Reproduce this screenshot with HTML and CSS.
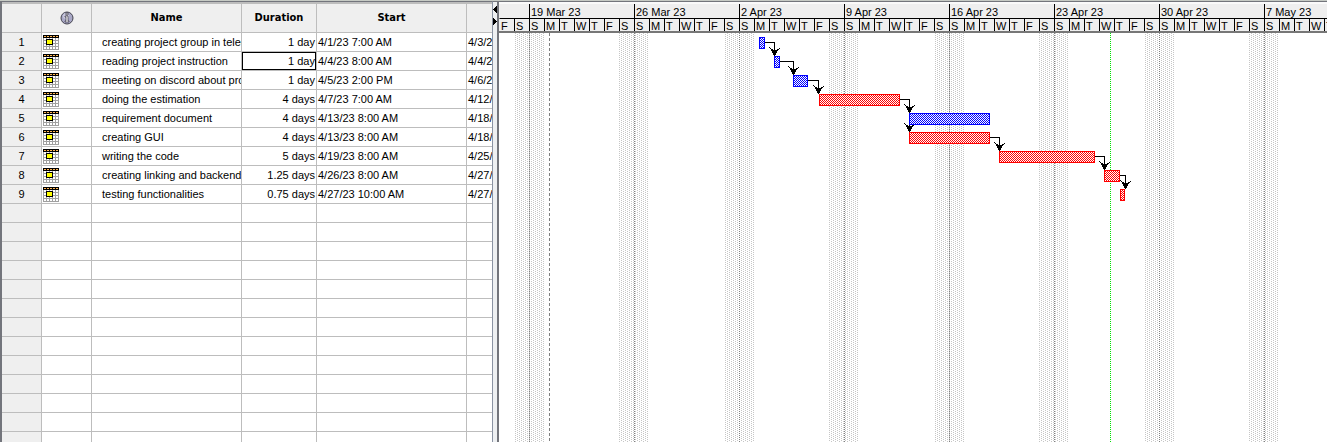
FILE: index.html
```
<!DOCTYPE html>
<html lang="en">
<head>
<meta charset="utf-8">
<title>Project Gantt</title>
<link rel="stylesheet" href="styles.css">
</head>
<body>
<svg class="defs" aria-hidden="true">
  <g id="calendar">
    <path fill="#fff" d="M0 0h16v15H0z"/>
    <path fill="#a0a0a0" d="M0 3h1v12H0zM3 3h1v12H3zM6 3h1v12H6zM9 3h1v12H9zM12 3h1v12h-1zM15 3h1v12h-1zM0 5h16v1H0zM0 8h16v1H0zM0 11h16v1H0zM0 14h16v1H0z"/>
    <path d="M0 0h16v3H0z"/>
    <path fill="#ffb655" d="M1 1h2v1H1zM4 1h2v1H4zM7 1h2v1H7zM10 1h2v1h-2zM13 1h2v1h-2z"/>
    <path d="M3 4h7v6H3z"/>
    <path fill="#ff0" d="M4 5h5v4H4z"/>
  </g>
</svg>
<main class="app">
  <section class="sheet">
    <table class="tasks">
      <colgroup><col class="c-id"><col class="c-info"><col class="c-name"><col class="c-dur"><col class="c-date"><col class="c-date"></colgroup>
      <thead>
        <tr>
          <th></th>
          <th class="info-head"><svg class="info" width="14" height="14" viewBox="0 0 14 14" role="img" aria-label="Indicators"><circle cx="7" cy="7" r="6" fill="#a9a8c6" stroke="#44434f"/><circle cx="6" cy="5" r="3" fill="#c9c8dd"/><path d="M6 2h2v2H6zM5 5h3v5h1v1H5v-1h1V6H5z" fill="#fff" stroke="#33323f" stroke-width=".7"/></svg></th>
          <th>Name</th><th>Duration</th><th>Start</th><th></th>
        </tr>
      </thead>
      <tbody id="rows"></tbody>
    </table>
  </section>
  <div class="splitter">
    <svg width="4" height="24" viewBox="0 0 4 24" shape-rendering="crispEdges" aria-hidden="true"><path d="M3 2h1v7H3zM2 3h1v5H2zM1 4h1v3H1zM0 5h1v1H0zM0 14h1v7H0zM1 15h1v5H1zM2 16h1v3H2zM3 17h1v1H3z"/></svg>
  </div>
  <section class="gantt">
    <header class="scale" id="scale"></header>
    <svg class="chart" id="chart" shape-rendering="crispEdges" role="img" aria-label="Gantt chart">
      <defs>
        <pattern id="weekend" width="4" height="2" patternUnits="userSpaceOnUse"><path fill="#c6c6c6" d="M0 0h1v1H0zM2 1h1v1H2z"/></pattern>
        <pattern id="dots" width="1" height="2" patternUnits="userSpaceOnUse"><path fill="#808080" d="M0 0h1v1H0z"/></pattern>
        <pattern id="today" width="1" height="2" patternUnits="userSpaceOnUse"><path fill="#00e000" d="M0 0h1v1H0z"/></pattern>
        <pattern id="dashes" width="1" height="5" patternUnits="userSpaceOnUse"><path fill="#808080" d="M0 0h1v3H0z"/></pattern>
        <pattern id="blue" width="2" height="2" patternUnits="userSpaceOnUse"><path fill="#fff" d="M0 0h2v2H0z"/><path fill="#00f" d="M0 0h1v1H0zM1 1h1v1H1z"/></pattern>
        <pattern id="red" width="2" height="2" patternUnits="userSpaceOnUse"><path fill="#fff" d="M0 0h2v2H0z"/><path fill="#f00" d="M0 0h1v1H0zM1 1h1v1H1z"/></pattern>
      </defs>
    </svg>
  </section>
</main>
<script src="script.js"></script>
</body>
</html>
```
FILE: styles.css
```
* { box-sizing: border-box; }
body {
  margin: 0;
  background: #fff;
  color: #000;
  font-family: Tahoma, "Liberation Sans", sans-serif;
  font-size: 11px;
}
.defs { position: absolute; width: 0; height: 0; }
.app {
  display: flex;
  height: 100vh;
  overflow: hidden;
  border-top: 1px solid #c6cac4;
}
.sheet {
  flex: 0 0 493px;
  overflow: hidden;
  border: solid #73757c;
  border-width: 1px 1px 0 2px;
  border-right-color: #8a93a3;
}
.tasks {
  width: 615px;
  table-layout: fixed;
  border-collapse: separate;
  border-spacing: 0;
  border-top: 2px solid #bdbdbd;
}
.c-id { width: 40px; }
.c-info { width: 50px; }
.c-name, .c-date { width: 150px; }
.c-dur { width: 75px; }
.tasks th, .tasks td {
  height: 19px;
  padding: 0 1px;
  overflow: hidden;
  white-space: nowrap;
  line-height: 18px;
  border-right: 1px solid #bdbdbd;
  border-bottom: 1px solid #bdbdbd;
}
.tasks thead th {
  height: 29px;
  background: #efefef;
  font-family: Tahoma, "DejaVu Sans Condensed", "DejaVu Sans", sans-serif;
  font-weight: bold;
}
.tasks tbody th {
  background: #efefef;
  font-weight: normal;
  text-align: center;
}
.info-head svg, .mark svg { display: block; }
.info-head svg { margin: 0 auto; }
.tasks .mark { padding-top: 2px; vertical-align: top; }
.tasks .name { padding-left: 10px; }
.tasks .dur { text-align: right; }
.tasks .selected { box-shadow: inset 0 0 0 1px #000; }
.splitter {
  flex: 0 0 6px;
  background: #eef0f2;
  border: solid #73757c;
  border-width: 1px 2px 0 0;
  padding-top: 2px;
}
.splitter svg { display: block; }
.gantt {
  flex: 1;
  min-width: 0;
  display: flex;
  flex-direction: column;
  overflow: hidden;
  border-top: 1px solid #73757c;
}
.scale {
  flex: 0 0 31px;
  display: flex;
  overflow: hidden;
  background: #efefef;
  border-top: 2px solid #fafafa;
  border-bottom: 2px solid #777;
}
.week { flex: none; }
.week-label {
  height: 15px;
  padding-left: 1px;
  line-height: 17px;
  white-space: nowrap;
  border-left: 1px solid #000;
  border-bottom: 1px solid #000;
}
.days { display: flex; }
.day {
  flex: 0 0 15px;
  height: 12px;
  padding-left: 1px;
  line-height: 15px;
  border-left: 1px solid #000;
}
.lead .week-label, .lead .day:first-child { border-left-color: transparent; }
.chart { flex: 1; width: 100%; min-height: 0; display: block; }
```
FILE: script.js
```
const tasks = [
  ["creating project group in telegram", "1 day", "4/1/23 7:00 AM", "4/3/23 5:00 PM"],
  ["reading project instruction", "1 day", "4/4/23 8:00 AM", "4/4/23 5:00 PM"],
  ["meeting on discord about project", "1 day", "4/5/23 2:00 PM", "4/6/23 2:00 PM"],
  ["doing the estimation", "4 days", "4/7/23 7:00 AM", "4/12/23 5:00 PM"],
  ["requirement document", "4 days", "4/13/23 8:00 AM", "4/18/23 5:00 PM"],
  ["creating GUI", "4 days", "4/13/23 8:00 AM", "4/18/23 5:00 PM"],
  ["writing the code", "5 days", "4/19/23 8:00 AM", "4/25/23 5:00 PM"],
  ["creating linking and backend", "1.25 days", "4/26/23 8:00 AM", "4/27/23 10:00 AM"],
  ["testing functionalities", "0.75 days", "4/27/23 10:00 AM", "4/27/23 5:00 PM"]
];
const icon = '<svg width="16" height="15" role="img" aria-label="Constraint"><use href="#calendar"/></svg>';
let rows = "";
for (let i = 0; i < 40; i++) {
  const t = tasks[i];
  rows += t
    ? `<tr><th scope="row">${i + 1}</th><td class="mark">${icon}</td><td class="name">${t[0]}</td><td class="dur${i === 1 ? " selected" : ""}">${t[1]}</td><td>${t[2]}</td><td>${t[3]}</td></tr>`
    : "<tr><th></th><td></td><td></td><td></td><td></td><td></td></tr>";
}
document.getElementById("rows").innerHTML = rows;

// Time scale: two leading days, then whole weeks starting on Sunday
const DAY = 15, LEAD = 2;
const WEEKS = Math.ceil(document.getElementById("chart").clientWidth / (7 * DAY));
const week = (label, days, cls) =>
  `<div class="week ${cls}"><div class="week-label">${label}</div><div class="days">${[...days].map(d => `<span class="day">${d}</span>`).join("")}</div></div>`;
const first = new Date(2023, 2, 19);
let scale = week("&nbsp;", "FS", "lead");
for (let i = 0; i < WEEKS; i++) {
  const d = new Date(first);
  d.setDate(d.getDate() + i * 7);
  scale += week(`${d.getDate()} ${d.toLocaleString("en", { month: "short" })} 23`, "SMTWTFS", "");
}
document.getElementById("scale").innerHTML = scale;

// Bars: start, width, row, colour
const bars = [
  [260, 6, 0, "blue"], [275, 6, 1, "blue"], [294, 15, 2, "blue"], [320, 81, 3, "red"],
  [410, 81, 4, "blue"], [410, 81, 5, "red"], [500, 96, 6, "red"], [605, 16, 7, "red"], [621, 5, 8, "red"]
];
// Links: from bar, to bar, x of the arrow
const links = [[0, 1, 275], [1, 2, 294], [2, 3, 319], [3, 5, 410], [3, 4, 410], [5, 6, 500], [6, 7, 605], [7, 8, 626]];
const top0 = 4, pitch = 19, color = { blue: "#00f", red: "#f00" };
let s = "";
for (let i = 0; i < WEEKS; i++) {
  const x = LEAD * DAY + i * 7 * DAY;
  s += `<rect x="${x - 15}" width="30" height="100%" fill="url(#weekend)"/><rect x="${x}" width="1" height="100%" fill="url(#dots)"/>`;
}
s += '<rect x="50" width="1" height="100%" fill="url(#dashes)"/><rect x="611" width="1" height="100%" fill="url(#today)"/>';
for (const [a, b, x] of links) {
  const sx = bars[a][0] + bars[a][1], sy = top0 + bars[a][2] * pitch + 5, ty = top0 + bars[b][2] * pitch;
  s += `<path d="M${sx} ${sy}H${x + 1}V${ty}H${x}V${sy + 1}H${sx}z"/>`;
  s += `<path d="M${x - 5} ${ty - 9}l3 2 2 1h2l2-1 2-2v1l-2 2-1 2-2 4h-1l-2-4-1-2-2-2z"/>`;
}
for (const [x, w, r, c] of bars) {
  const y = top0 + r * pitch;
  s += `<rect x="${x}" y="${y}" width="${w}" height="12" fill="${color[c]}"/><rect x="${x + 1}" y="${y + 1}" width="${w - 2}" height="10" fill="url(#${c})"/>`;
}
document.getElementById("chart").insertAdjacentHTML("beforeend", s);
```
